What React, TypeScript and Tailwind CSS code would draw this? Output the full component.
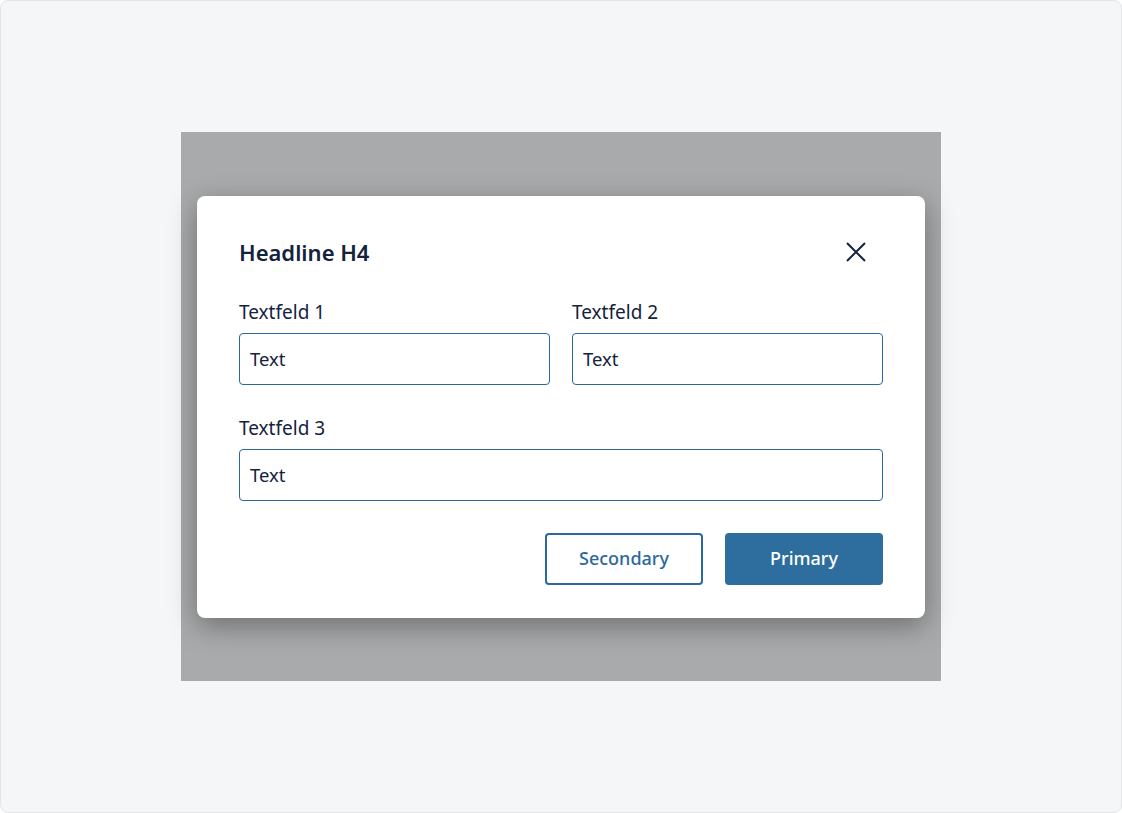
import React from 'react';

const Field: React.FC<{ label: string; className?: string }> = ({ label, className }) => (
  <label className={`flex flex-col ${className ?? ''}`}>
    <span className="text-[19px] leading-[24px] text-[#14233c]">{label}</span>
    <input
      defaultValue="Text"
      className="mt-[9px] h-[52px] w-full rounded-[4px] border border-[#2b67a0] bg-white px-[10px] text-[18.5px] text-[#14233c] outline-none"
    />
  </label>
);

const App: React.FC = () => {
  return (
    <div
      className="flex h-[813px] w-[1122px] items-center justify-center rounded-[8px] border border-[#e3e5e8] bg-[#f5f6f8]"
      style={{ fontFamily: '"Noto Sans", "Open Sans", sans-serif' }}
    >
      {/* Overlay preview */}
      <div className="flex h-[549px] w-[760px] items-center justify-center bg-[#a9aaab]">
        {/* Dialog */}
        <div className="w-[728px] rounded-[8px] bg-white px-[42px] pt-[42px] pb-[33px] shadow-[0_8px_28px_rgba(0,0,0,0.35)]">
          <div className="flex items-center justify-between">
            <h4 className="text-[22px] font-semibold leading-[28px] text-[#14233c]">Headline H4</h4>
            <button className="mr-[16px] flex h-[22px] w-[22px] items-center justify-center text-[#14233c]">
              <svg width="20" height="20" viewBox="0 0 20 20" fill="none" stroke="currentColor" strokeWidth="2">
                <path d="M1 1L19 19M19 1L1 19" />
              </svg>
            </button>
          </div>

          <div className="mt-[34px] grid grid-cols-2 gap-x-[22px]">
            <Field label="Textfeld 1" />
            <Field label="Textfeld 2" />
          </div>
          <Field label="Textfeld 3" className="mt-[31px]" />

          <div className="mt-[32px] flex justify-end gap-[22px]">
            <button className="h-[52px] w-[158px] rounded-[4px] border-2 border-[#2b67a0] bg-white text-[18px] font-medium text-[#2b67a0]">
              Secondary
            </button>
            <button className="h-[52px] w-[158px] rounded-[4px] bg-[#2d6e9e] text-[18px] font-medium text-white">
              Primary
            </button>
          </div>
        </div>
      </div>
    </div>
  );
};

export default App;
